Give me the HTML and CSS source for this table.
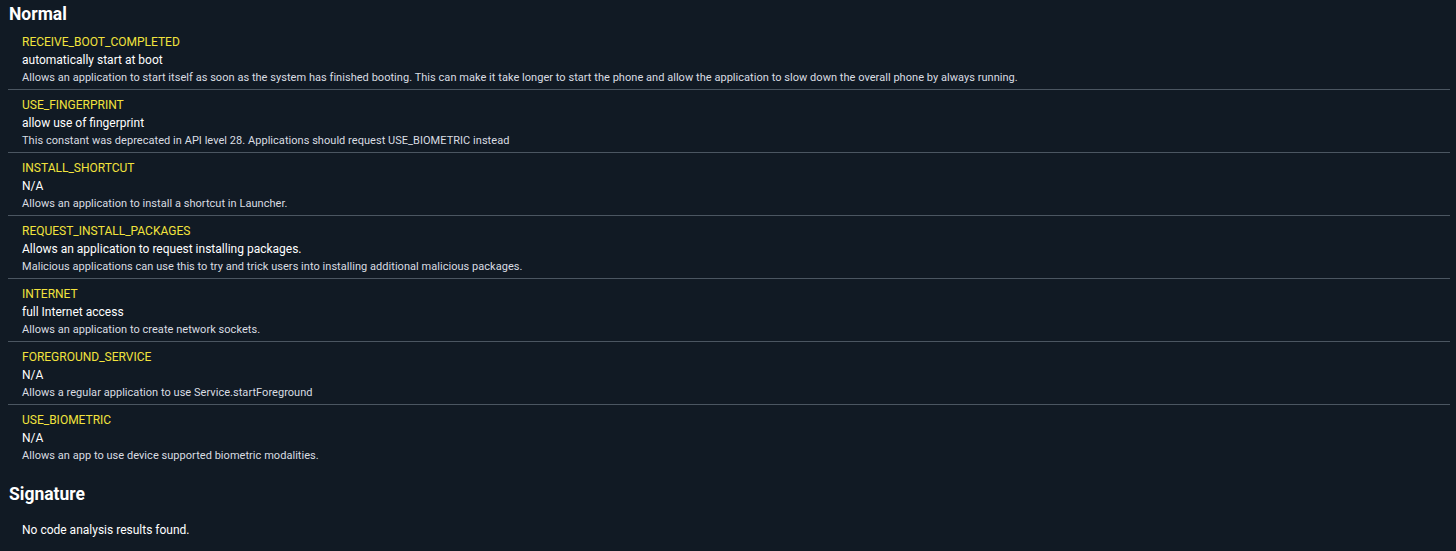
FILE: index.html
```html
<!DOCTYPE html>
<html>
<head>
<meta charset="utf-8">
<link rel="stylesheet" href="styles.css">
</head>
<body>
<div class="page">
  <h2 class="section-title">Normal</h2>
  <ul class="perm-list">
    <li class="perm">
      <div class="perm-name">RECEIVE_BOOT_COMPLETED</div>
      <div class="perm-label">automatically start at boot</div>
      <div class="perm-desc">Allows an application to start itself as soon as the system has finished booting. This can make it take longer to start the phone and allow the application to slow down the overall phone by always running.</div>
    </li>
    <li class="perm">
      <div class="perm-name">USE_FINGERPRINT</div>
      <div class="perm-label">allow use of fingerprint</div>
      <div class="perm-desc">This constant was deprecated in API level 28. Applications should request USE_BIOMETRIC instead</div>
    </li>
    <li class="perm">
      <div class="perm-name">INSTALL_SHORTCUT</div>
      <div class="perm-label">N/A</div>
      <div class="perm-desc">Allows an application to install a shortcut in Launcher.</div>
    </li>
    <li class="perm">
      <div class="perm-name">REQUEST_INSTALL_PACKAGES</div>
      <div class="perm-label">Allows an application to request installing packages.</div>
      <div class="perm-desc">Malicious applications can use this to try and trick users into installing additional malicious packages.</div>
    </li>
    <li class="perm">
      <div class="perm-name">INTERNET</div>
      <div class="perm-label">full Internet access</div>
      <div class="perm-desc">Allows an application to create network sockets.</div>
    </li>
    <li class="perm">
      <div class="perm-name">FOREGROUND_SERVICE</div>
      <div class="perm-label">N/A</div>
      <div class="perm-desc">Allows a regular application to use Service.startForeground</div>
    </li>
    <li class="perm">
      <div class="perm-name">USE_BIOMETRIC</div>
      <div class="perm-label">N/A</div>
      <div class="perm-desc">Allows an app to use device supported biometric modalities.</div>
    </li>
  </ul>
  <h2 class="section-title section-gap">Signature</h2>
  <p class="empty">No code analysis results found.</p>
</div>
</body>
</html>
```

FILE: styles.css
```css
html, body {
  margin: 0;
  padding: 0;
  background: #111a24;
}
body {
  font-family: Roboto, "Noto Sans", sans-serif;
  color: #ffffff;
}
.page {
  padding: 1px 6px 0 8px;
}
.section-title {
  margin: 0;
  padding-left: 1px;
  font-size: 17.5px;
  font-weight: 700;
  line-height: 26px;
  color: #ffffff;
}
.section-gap {
  margin-top: 14px;
}
.perm-list {
  list-style: none;
  margin: 0;
  padding: 0;
}
.perm {
  padding: 7px 0 4px 14px;
  border-bottom: 1px solid #4b5661;
}
.perm:last-child {
  border-bottom: none;
}
.perm-name {
  font-size: 12px;
  line-height: 16px;
  color: #f2e33d;
}
.perm-label {
  font-size: 12px;
  line-height: 21px;
  color: #ffffff;
}
.perm-desc {
  font-size: 11px;
  line-height: 14px;
  color: #d9dde2;
  letter-spacing: 0.04px;
}
.empty {
  margin: 13px 0 0;
  padding-left: 14px;
  font-size: 12px;
  line-height: 20px;
  color: #ffffff;
}
```
